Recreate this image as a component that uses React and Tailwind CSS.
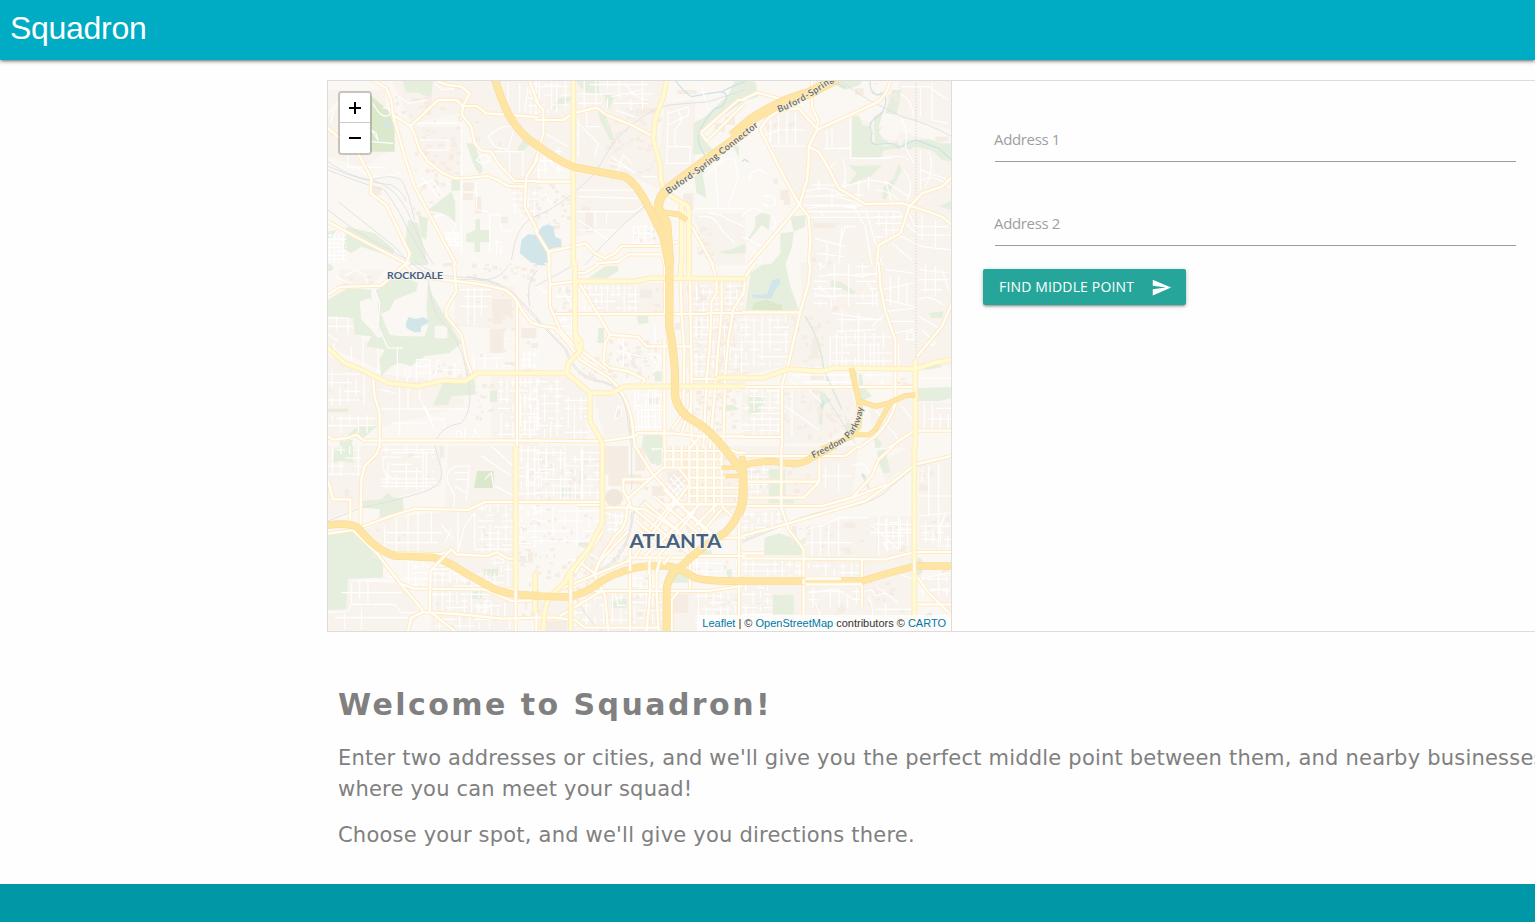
import React from "react";

// Each sheet covers a 210x185 area of the map, drawn at three units per pixel.
const sheets = [
  {
    x: 328, y: 80,
    land: ["0,30 170,30 190,210 100,262 0,230", "190,0 630,0 630,300 560,300 490,215 440,190 400,100 250,130", "250,140 400,140 400,290 340,280 280,220", "540,310 630,310 630,440 580,400"],
    parks: ["225,3 315,3 310,53 270,38 232,38", "415,188 440,192 465,270 455,285 435,250", "565,215 595,160 610,190 580,215", "370,300 397,300 397,332 370,332", "300,390 370,335 382,365 382,430 340,400", "442,418 456,418 456,450 484,450 484,487 456,487 456,516 440,516 440,487 414,487 414,462 442,450", "240,420 270,430 300,555 250,555 233,480", "270,405 300,415 295,480 280,470", "55,440 140,460 200,510 190,530 100,500 70,520 48,505", "0,455 25,450 10,475 0,475"],
    dark: ["120,40 185,95 200,150 200,215 120,215"],
    water: ["580,480 600,463 632,465 632,550 610,548 575,520", "166,137 178,126 190,128 190,136 172,145"],
    buildings: [[405, 308, 32, 25], [405, 340, 30, 20], [290, 60, 20, 45], [440, 350, 20, 50], [250, 55, 30, 12], [135, 320, 25, 25], [515, 410, 25, 20]],
    minor: ["M135,70 Q160,120 185,105 Q190,80 165,85 M130,150 L150,180 145,160 Z M130,185 L195,190", "M60,225 V262 H170 M90,262 Q130,310 215,280", "M10,130 Q10,80 50,60 M0,110 Q20,60 60,50", "M400,130 V520 M250,130 H385 M275,180 H360 V210 H290", "M445,305 V390 L480,395 M485,400 V520 M485,405 H515 L520,450 550,455", "M480,170 Q520,130 560,140 L540,210 500,200 Z", "M545,220 V300 M500,215 H585 V290", "M445,240 Q470,210 485,240 Q465,260 445,240", "M320,10 L345,30 380,25", "M200,40 L240,70 300,60 M540,5 V80 M575,10 V95 M600,20 L590,95", "M310,420 Q350,380 385,440 L350,480", "M280,290 L330,350 M265,320 L315,300 340,340"],
    rail: ["M0,245 Q60,290 130,300 Q210,320 250,420 Q300,540 320,555", "M0,270 Q100,310 170,330 Q220,400 240,450 L300,550", "M0,258 Q100,305 190,315 Q230,340 235,365", "M30,365 L200,500 250,555", "M0,390 Q60,440 130,480 L240,540", "M130,300 Q190,280 220,300 Q240,330 260,420", "M630,405 Q580,420 560,490 L550,540"],
    sec: ["M135,0 L175,25 190,60 195,105 230,230 260,320 340,470 385,555", "M195,105 L248,138 260,165 275,210 300,245 345,280 380,295 430,293 480,288 510,300 540,318 590,320", "M248,138 L330,60 385,60 405,78 445,78 475,100 550,105 630,112", "M330,5 L360,15 400,20 425,40 405,78 402,105 430,140 440,190 460,212 490,215 510,250 560,303 630,303", "M0,145 L90,220 130,295 128,340 175,375 230,490 245,520 235,555", "M0,425 L120,490 235,550", "M630,235 L595,290 590,380 630,455", "M605,5 L630,70"],
    hwy: [["M500,-5 Q520,60 540,100 Q570,160 632,200", 20]],
    grids: [[600, 0, 30, 110, 16, 22], [550, 330, 80, 80, 20, 18], [0, 460, 55, 90, 13, 12], [350, 455, 45, 45, 9, 9], [500, 480, 30, 45, 12, 13]],
    blds: [[200, 20, 200, 120, 20], [260, 140, 130, 140, 34], [250, 290, 90, 110, 14], [410, 110, 120, 100, 8], [0, 60, 110, 150, 8]],
  },
  {
    x: 535, y: 80,
    land: ["0,0 390,0 355,170 380,330 290,290 120,260 0,190", "390,70 480,60 480,260 390,320 370,230", "120,280 280,300 340,380 240,450 120,470", "470,400 630,400 630,555 535,555"],
    parks: ["122,0 190,0 193,42 155,38 135,20", "205,43 240,45 222,90", "190,90 205,90 240,180 225,180 195,120", "475,130 510,110 580,45 600,0 632,0 632,60 490,160 515,190 540,215 475,225", "478,290 500,265 515,355 485,340", "50,90 70,55 110,50 110,60", "590,190 612,200 612,235", "552,515 590,508 632,490 632,520 580,522"],
    water: ["0,470 20,440 38,433 56,440 60,470 78,478 80,500 50,505 38,520 42,545 20,552 0,545"],
    rivers: ["M420,0 Q450,40 470,50 Q520,40 560,35 Q590,45 560,80 L540,85 Q490,140 490,180 Q500,220 515,230", "M560,35 Q600,15 630,5"],
    buildings: [[150, 395, 25, 60], [140, 380, 25, 12], [425, 30, 60, 12], [445, 340, 30, 50], [300, 85, 60, 15], [540, 130, 30, 25], [570, 110, 30, 25]],
    minor: ["M130,115 V230 M130,130 L190,190 180,230 M155,90 V140 H195", "M270,10 Q300,60 340,60 M230,50 L320,30 M240,90 L300,110", "M130,330 H300 M130,350 L310,355 M125,395 H300 L320,380 M180,395 V440 M215,395 V430", "M230,230 L300,280 M220,245 L290,270 M240,290 L265,225 290,250 M320,290 H365", "M400,90 L395,250 H465 V200 M395,200 H465 M430,90 L440,120 420,150 420,200", "M500,20 L520,90 M400,100 L460,80 460,105 400,135", "M510,290 Q570,220 600,240 L610,290 580,380 M540,250 L550,380 M480,385 H630", "M490,410 Q540,400 560,450 L600,490 M520,400 Q560,400 580,420 L630,440", "M295,440 V490 H350 V440 H295 M310,440 V490 M330,440 V490 M295,460 H350", "M130,420 L220,480 M130,450 H240 M60,390 L30,340", "M0,20 H100 M50,0 V90 M30,160 L100,200"],
    rail: ["M0,410 Q80,380 180,280 L240,180 Q330,90 400,75 L520,65 630,30", "M150,555 Q250,440 340,370"],
    prim: ["M115,0 V555", "M395,0 L385,50 360,120 355,180 375,250 378,300 390,335 435,365"],
    sec: ["M0,60 L25,90 25,160 0,250", "M0,120 H85 L115,100 185,83 215,105 290,135 355,170", "M0,305 H110", "M0,450 L40,515 45,555", "M40,515 L110,500 150,490 180,520 210,535 240,520 260,498 370,498 430,485", "M185,550 L250,545 280,523 380,523 390,555", "M465,430 L535,555", "M497,158 L610,60 630,60 M497,158 L515,183 630,70"],
    prim2: ["M435,365 Q465,375 462,395 V555", "M440,375 V555"],
    hwy: [["M-4,188 Q70,245 120,262 L270,290 Q305,310 340,380 L385,470 401,555", 20], ["M635,152 L500,250 400,325 Q370,350 370,385 L395,430 404,555", 24], ["M370,395 L430,403 455,420", 13]],
    grids: [[0, 0, 105, 100, 26, 30], [0, 200, 80, 95, 20, 28], [130, 0, 220, 90, 35, 28]],
    blds: [[210, 110, 150, 180, 40], [0, 310, 100, 130, 26], [260, 60, 110, 80, 14], [480, 440, 50, 100, 14], [280, 430, 80, 60, 9]],
  },
  {
    x: 742, y: 80,
    land: ["60,110 170,90 225,150 190,300 170,370 110,260", "230,150 330,110 630,200 630,555 210,555 200,400 175,370 200,210", "470,0 630,0 630,150 470,110"],
    parks: ["330,110 350,105 360,135 385,140 390,185 430,200 465,185 480,205 425,210 420,232 330,232", "450,30 478,30 465,105 430,100", "485,180 560,178 600,190 630,190 630,245 600,240 570,210 520,200 500,210 480,200", "320,255 350,258 420,255 385,290 320,312 345,280", "470,250 480,270 430,360 420,355 425,320 455,295", "145,410 190,405 190,440 155,455", "115,460 155,455 150,500 130,555 85,555 115,520", "40,410 60,398 85,405 80,450 60,435 30,470 10,490 40,440", "590,380 630,360 630,390", "0,0 40,5 50,50 15,60 0,60", "265,0 360,0 355,15 310,30 270,10", "395,110 425,90 410,140 440,190 400,190"],
    paper: ["410,155 430,135 470,140 475,155 460,180 425,178"],
    rivers: ["M385,0 Q380,35 405,45 Q430,35 432,60 Q430,100 400,115 Q375,130 390,160 Q380,190 400,193 L450,190 470,203 520,180 590,205 630,240", "M270,5 Q300,15 310,25", "M0,245 L8,238 20,247"],
    buildings: [[115, 330, 25, 30], [125, 350, 20, 25], [95, 295, 12, 18], [340, 25, 25, 20], [580, 170, 40, 15], [215, 430, 65, 14]],
    minor: ["M70,190 L130,300 M60,170 L110,150 H190 M85,115 V190 M110,100 V195 M135,100 V195 M160,100 V195 M65,198 H190", "M255,150 V205 M270,145 V200 M245,205 H325 M325,110 V235 H450", "M280,245 L260,270 M300,235 Q320,290 300,320 L390,300 440,310 500,350", "M190,335 Q270,310 300,350 M190,350 Q280,340 350,370 M200,385 Q260,370 340,385 M180,375 L345,380", "M180,395 H475 M200,412 H475 M235,395 L245,410 M370,385 L420,555 M330,370 L370,440 390,555", "M220,475 L310,500 M290,500 L310,440 340,440 M225,520 L305,530 M300,440 L290,555 M255,490 V550", "M480,120 Q500,160 490,200 L515,250 M475,40 Q510,60 515,110 M480,20 H560 L620,60 M535,20 V110 M570,10 V120 L620,130", "M485,270 Q520,310 495,360 M410,235 Q480,220 500,240 M380,290 V330 M430,300 L450,370 M400,330 Q440,330 470,360", "M535,210 V330 M560,215 Q580,260 550,320 M535,270 L620,300 M540,300 Q580,280 620,320", "M500,400 L520,440 H620 M490,430 L530,465 H625 M480,470 L540,500 630,510 M450,490 L510,540 M540,400 V480 M580,420 V500", "M0,410 Q30,370 60,395 M60,350 Q100,340 100,370 Q80,390 65,370 M20,300 Q40,250 70,280 M0,470 Q30,480 60,500 M90,410 Q110,430 90,450 M20,500 L60,540"],
    rail: ["M290,0 L380,60 480,110 Q560,130 630,170"],
    sec: ["M0,60 L45,38 110,55 125,70", "M55,150 Q70,110 120,90 L170,85 228,150 M55,150 L120,280 172,375 200,410 205,480 200,555", "M210,0 L210,80 228,120 225,150 200,200 200,240 195,300 172,375 20,555", "M445,5 Q430,55 400,70 L225,150", "M200,200 L230,215 260,265 290,325 370,372 480,370 560,395 600,410 630,435", "M630,290 L600,320 540,340 502,380 475,460 410,495 405,555"],
    hwy: [["M-30,168 L30,117 Q120,60 200,40 L285,-5", 27]],
    grids: [[400, 400, 80, 80, 22, 20], [210, 300, 180, 80, 40, 30]],
    blds: [[380, 0, 80, 60, 14], [60, 110, 120, 60, 7], [210, 400, 200, 150, 8]],
    border: "M522,8 V555",
  },
  {
    x: 328, y: 263,
    land: ["0,160 75,160 80,215 155,250 155,320 0,250", "0,280 130,330 400,360 410,430 0,530", "380,70 560,70 560,200 380,190", "490,340 630,340 630,555 490,530", "30,20 170,20 130,70 40,60"],
    parks: ["0,110 60,75 130,80 130,110 95,115 100,170 130,200 150,225 175,215 230,220 290,220 300,190 295,130 300,60 315,100 400,240 365,270 290,280 250,310 215,300 190,310 160,340 155,290 170,260 145,255 115,250 130,220 80,215 75,165 0,160", "140,85 180,55 200,30 270,60 265,85 200,110 185,140 155,155 150,110", "345,360 440,350 443,395 370,400 360,425 315,428", "486,383 508,383 508,417 486,417", "0,437 60,437 60,447 0,447", "90,490 150,487 100,530 60,515", "0,0 15,10 15,20 0,25", "35,535 75,530 70,555 35,555", "150,110 160,155 190,215 170,230 150,200"],
    paper: ["95,115 125,105 150,150 148,195 120,180", "188,140 220,110 270,85 295,90 290,125 300,190 290,220 185,215 165,170", "320,188 358,188 358,226 320,226"],
    water: ["233,180 242,162 262,168 285,162 302,172 298,182 280,190 278,208 258,208 235,195"],
    buildings: [[493, 108, 58, 50], [495, 108, 28, 75], [485, 197, 42, 73], [580, 195, 45, 30], [610, 240, 20, 15], [530, 297, 30, 12], [345, 0, 40, 10]],
    minor: ["M140,80 L155,120 150,190 180,255 H225 M208,255 V350 M150,255 V330", "M0,165 H60 V215 M25,160 V200 M20,240 Q10,270 50,285 M0,190 H75 M70,250 V290 M105,220 V320 M0,215 L30,235", "M265,290 H305 M265,290 V355 M305,290 V355 M265,310 H300 M265,330 H300 M230,335 Q228,315 245,322 Q250,335 238,345 V368", "M240,375 V435 M150,438 H425 M215,370 V515 M275,370 V405 L320,500 M290,430 L310,470 350,465 340,475 M190,480 H300", "M345,320 H400 M330,290 L320,340 M380,300 V345", "M350,500 V480 M385,525 V505 H400 V525 M410,525 V500 M435,525 L440,500 455,525", "M395,80 H490 M410,100 H490 M395,130 H480 M420,75 V185 M440,75 V185 M460,75 V160", "M50,40 L80,20 110,35 120,60 M20,40 L60,60 M160,380 L200,390"],
    rail: ["M250,0 Q300,45 380,50 Q480,40 545,85 L630,175", "M260,-5 Q310,35 380,42 Q490,38 550,85 L630,165", "M300,50 Q310,130 330,160 Q400,240 410,300 L425,380 Q430,450 400,480 Q340,490 325,530", "M630,20 Q590,60 605,130", "M420,40 Q500,70 540,10"],
    prim: ["M-3,252 L50,300 100,320 180,360 270,370 350,352 410,355 450,330 632,330"],
    sec: ["M0,95 L35,72 160,68 230,5 245,0 M230,5 L245,20 260,40 390,55 Q480,65 530,80 Q565,100 580,140 L610,180 630,183", "M378,0 L385,85 355,135 355,160 400,215 415,290 430,330", "M567,115 V555", "M135,345 L140,400 155,450 155,555", "M0,520 L15,530 60,525 85,515 105,532 630,533"],
    grids: [[0, 320, 120, 110, 24, 26], [0, 455, 140, 55, 26, 22], [510, 345, 120, 180, 18, 26], [580, 265, 50, 50, 16, 17], [420, 275, 130, 45, 34, 22], [570, 345, 60, 180, 14, 24]],
    blds: [[400, 90, 220, 240, 22], [310, 285, 90, 60, 9], [430, 350, 60, 120, 14], [430, 0, 190, 50, 22], [40, 5, 120, 60, 6], [0, 260, 120, 160, 7]],
  },
  {
    x: 535, y: 263,
    land: ["125,60 385,60 385,150 180,150", "0,340 95,340 160,390 160,530 0,530", "430,55 630,55 630,365 475,365 450,300", "175,400 250,395 290,510 210,525"],
    parks: ["160,45 210,10 250,8 250,25 215,45", "305,160 340,158 340,180 310,184", "190,195 207,195 207,240 187,240", "360,325 380,325 380,355 360,355", "325,515 385,515 385,555 320,555", "570,425 595,426 612,440 570,445"],
    water: ["0,0 25,0 35,8 5,6"],
    buildings: [[315, 80, 35, 25], [455, 65, 12, 20], [420, 180, 16, 20], [240, 440, 20, 25], [340, 405, 30, 18]],
    minor: ["M245,440 Q250,420 260,440 Q260,470 240,465 Z", "M345,280 L370,310 355,330 M340,270 L375,280 370,310", "M0,70 L40,90 M75,60 L110,130 M60,100 H115", "M250,230 L290,290 M230,260 L320,280 M265,225 V310", "M145,290 L190,310 M300,375 V440 H385 M340,375 V500 M360,375 V500 M320,430 V510 H385", "M50,210 L90,160 M360,190 V245"],
    rail: ["M0,165 L90,260 Q120,350 200,358 Q260,370 275,450 L290,555", "M5,165 L95,260 Q125,345 205,355 Q265,370 280,450 L295,555", "M0,70 L110,10"],
    prim: ["M120,-4 V210 L140,240 135,265 100,300 95,330 -2,330", "M125,55 H300 L350,45 632,48", "M95,330 L165,390 230,390 270,370 632,370", "M165,390 V475 L200,535 205,555", "M120,210 L125,245 135,265", "M540,350 L555,343 H632", "M437,0 V50 M462,0 V50"],
    sec: ["M40,0 L45,60 45,130 75,200 135,270 M45,65 L120,55", "M125,30 L150,30 190,5", "M0,185 L60,195 100,240 135,290 200,330 Q270,370 290,470 L300,555", "M60,153 H510 L525,150 H630", "M130,55 L225,215 310,222 335,250 H470", "M225,215 L210,240 205,300 225,315 280,325 330,350 320,365", "M135,260 L215,320", "M390,0 V150", "M388,225 V555", "M437,50 L440,155 448,260 445,450 410,500", "M465,50 L470,330 468,430 470,530 485,545 M470,420 L440,510", "M530,0 L545,50 545,90 530,115 525,240 515,350 505,555", "M560,50 L560,150 550,250 540,380 525,555", "M630,80 L595,140 580,230 570,340 565,555", "M0,533 L200,535 300,520 310,510 420,512 500,520 630,520", "M475,348 H540", "M500,515 L465,555"],
    hwy: [["M403,-4 V190 Q415,250 420,330 V400 Q430,450 480,475 Q525,500 572,562", 21]],
    grids: [[140, 65, 170, 80, 17, 20], [0, 345, 85, 180, 19, 22], [90, 400, 70, 130, 19, 24], [475, 60, 150, 85, 20, 18], [475, 160, 150, 190, 17, 22], [300, 380, 85, 125, 21, 32], [60, 160, 60, 60, 20, 20]],
    blds: [[210, 230, 160, 110, 50], [55, 60, 60, 90, 12], [475, 50, 150, 300, 90], [400, 380, 100, 130, 15], [130, 270, 90, 80, 20], [480, 375, 140, 130, 36], [350, 60, 40, 90, 8]],
  },
  {
    x: 742, y: 263,
    land: ["175,0 630,0 630,310 140,310 180,140", "0,155 170,155 130,310 0,340", "0,380 115,380 115,520 0,520", "530,420 630,420 630,500 530,500", "380,430 510,400 510,555 400,555", "125,380 330,380 345,480 240,540 125,540"],
    parks: ["25,30 60,5 130,0 145,70 170,140 150,145 60,142 10,140", "270,50 300,60 340,85 335,95 290,75 265,70", "320,320 340,325 360,335 365,370 390,400 350,420 340,360", "525,375 630,372 630,405 590,415 525,415", "235,380 250,400 270,410 245,430 240,490 230,480", "310,480 330,480 330,520 310,520", "20,400 65,400 65,445 20,455", "560,150 605,145 600,165 570,165", "395,515 420,540 415,555 400,555", "530,318 590,302 600,312 560,320"],
    dark: ["35,120 70,110 120,125 120,142 30,140"],
    water: ["30,95 75,93 90,52 112,45 116,60 98,85 88,108 30,104", "236,410 248,415 242,440 236,432"],
    buildings: [[210, 225, 20, 60], [205, 335, 40, 15], [340, 440, 12, 20], [225, 180, 12, 14], [270, 130, 20, 15], [210, 380, 20, 14]],
    minor: ["M230,0 Q240,20 250,5 M230,40 Q300,30 360,40 L405,30 M215,90 Q270,110 300,95 M230,70 L265,100 270,135", "M270,150 L400,170 M285,170 H420 M285,205 L400,200 M300,140 V215 M350,150 V310 M390,190 L430,150 M375,60 Q400,80 390,130", "M265,215 V310 M300,225 V315 M430,20 L515,30 M420,80 L515,60 M430,110 L515,130 M445,40 V130 M470,35 V120 M495,60 V130", "M435,145 L515,135 M445,175 H515 M455,210 L515,200 M495,205 V235 M500,210 Q520,200 515,230 H490", "M530,20 L620,30 M530,50 H620 M535,80 H600 M550,0 V90 M580,10 V100 M600,20 L620,80 M530,110 Q560,90 610,130", "M530,160 L600,200 M540,200 L580,240 M560,235 L570,248 580,240 570,230 Z", "M530,345 H630 M145,350 L160,365 M470,240 V310 M385,240 V310 M410,240 V310", "M480,430 L510,470 M400,440 L470,530 M130,430 L230,500 M150,380 V520 M200,380 L240,420"],
    green: ["M190,160 Q240,240 245,320", "M245,320 L300,440"],
    rail: ["M245,390 L340,540"],
    prim: ["M-3,345 L65,345 140,318 240,325 275,315 520,318 580,298 632,290", "M520,290 V555"],
    sec: ["M40,0 L10,40 5,90 0,100", "M205,0 L200,60 175,145 140,300 120,365 120,555", "M0,148 H175", "M410,0 L415,70 430,145 460,230 460,420", "M630,120 L600,190 525,280", "M0,372 H520", "M520,503 H630", "M460,420 Q450,470 400,520 L350,555", "M520,500 L440,555", "M0,522 H120"],
    hwy: [["M328,315 L345,390 355,440 350,490 330,520 238,558", 13], ["M355,415 L400,430 440,420 490,398 520,396", 12], ["M445,420 L400,500 380,515 340,515", 11]],
    grids: [[0, 160, 140, 150, 24, 22], [0, 375, 115, 145, 24, 17], [215, 0, 190, 130, 42, 22], [270, 210, 180, 100, 28, 24], [535, 420, 95, 80, 24, 32], [150, 325, 300, 45, 36, 22]],
    blds: [[115, 155, 50, 40, 7], [180, 150, 80, 200, 18], [125, 385, 110, 140, 18], [250, 420, 90, 100, 16], [460, 320, 60, 50, 8]],
    border: "M522,0 V285",
  },
  {
    x: 328, y: 446,
    land: ["0,0 340,0 340,120 100,180 0,220", "360,0 560,0 560,165 440,180 350,190", "100,255 190,215 560,175 560,425 500,425 340,330 200,320", "60,400 210,415 280,500 240,555 0,555 0,495 55,490", "310,380 500,435 560,470 560,555 310,555", "570,0 630,0 630,165 570,165"],
    parks: ["20,10 75,0 75,50 40,45 15,50", "105,165 160,160 180,140 195,155 225,155 228,205 155,218 155,190 105,185", "0,260 75,255 165,335 165,395 60,398 55,490 0,492", "465,370 510,368 510,390 470,388", "432,435 462,435 462,458 432,458"],
    dark: ["447,75 497,75 497,126 438,126"],
    buildings: [[335, 0, 14, 35], [50, 130, 12, 20], [575, 330, 20, 15], [600, 320, 14, 30], [605, 80, 18, 14]],
    minor: ["M170,30 Q150,80 200,100 M180,50 V110 M160,110 H330 M190,20 H320 M285,10 V145", "M360,110 Q350,60 400,60 H425 L415,165 M360,110 L380,150 375,200 M380,80 H420 M385,100 H420 M380,120 L415,140", "M470,100 L490,80 497,125 M460,30 L550,90 M490,0 L555,60 M500,120 L560,150", "M70,410 V470 M95,405 V460 M120,405 V470 M70,405 H200 M40,440 H220 M0,500 L60,495 70,475 H200 L220,500 280,500 M50,500 V550 M100,490 V550 M20,515 H240", "M170,240 V320 M205,215 V320 M240,200 V320 M175,290 H330 M175,260 H340 M270,190 V320 M310,195 V290", "M370,250 L350,290 M340,235 L375,280 M390,200 V320 L410,240 440,200 M440,200 V310 H550", "M600,70 H620 V110 H600 Z M595,50 V120", "M180,390 L215,405 M270,400 L300,430", "M490,340 Q510,325 530,345 M490,350 H530"],
    rail: ["M0,225 L100,185 Q200,165 280,140 Q350,120 340,70 L320,0"],
    prim: ["M563,0 V430"],
    sec: ["M155,0 L145,25 110,60 100,100 97,245", "M0,105 L15,160 H67 V240", "M0,263 L75,252 145,320 215,410 270,475 285,495", "M100,243 L190,210 260,188 420,192 470,168 630,168", "M145,320 L340,325 370,310 385,325 480,330 505,318 540,338 563,338", "M215,412 L260,428 470,430 550,465 630,463", "M470,430 H563", "M285,498 L250,515 240,555", "M285,498 L400,505 520,518 630,515", "M310,500 L380,555", "M563,460 V555", "M625,380 V555"],
    hwy: [["M-4,238 Q60,228 90,245 Q140,310 200,330 L320,335 Q360,345 410,380 L500,430 Q540,447 634,449", 19]],
    over: ["M370,310 L335,345 308,375 305,498", "M310,370 H365", "M563,430 V465"],
    grids: [[0, 0, 100, 90, 26, 24], [160, 0, 160, 130, 30, 22], [450, 180, 110, 140, 24, 18], [230, 335, 75, 90, 22, 18], [310, 375, 180, 55, 22, 18], [310, 435, 180, 65, 22, 20], [570, 175, 60, 130, 20, 18], [570, 0, 60, 160, 20, 26], [320, 510, 230, 40, 30, 20], [440, 470, 110, 50, 20, 18], [490, 340, 70, 90, 20, 20]],
    blds: [[570, 300, 60, 60, 10], [570, 170, 60, 120, 12], [100, 240, 400, 100, 10], [310, 380, 240, 160, 8], [240, 0, 90, 120, 5], [570, 370, 60, 160, 16]],
  },
  {
    x: 535, y: 446,
    land: ["0,0 195,0 195,165 0,165", "210,190 280,180 200,370 110,380 200,260", "110,440 390,440 390,555 110,555", "410,440 630,440 630,555 410,555", "385,0 620,0 600,200 500,240 380,100", "0,460 100,460 100,555 0,555"],
    parks: ["80,125 107,125 107,152 80,152", "225,470 275,450 275,485 235,485", "345,15 380,10 380,55 365,60", "385,415 400,370 420,365 480,395 470,410 400,410", "130,290 160,288 155,305 130,305", "575,370 590,370 590,400 575,400", "495,315 530,312 530,328 495,328", "318,0 345,0 370,50 350,55"],
    buildings: [[210, 0, 70, 85], [250, 85, 70, 30], [220, 85, 45, 35], [412, 445, 48, 55], [35, 525, 60, 30], [300, 5, 30, 70], [400, 75, 60, 40], [350, 120, 40, 30]],
    domes: [[237, 155, 27]],
    minor: ["M210,200 L250,210 240,260 M130,300 L190,340 M110,350 L150,375 M90,350 Q110,330 130,350", "M10,70 H60 M0,100 L20,90 20,120 M90,0 V165 M140,0 V165 M110,40 H195 M35,0 V60", "M240,280 L210,350 M120,460 V540 M240,440 L250,480", "M395,130 L440,90 M405,145 L452,100 M415,158 L460,112 M405,95 L455,150 M395,110 L440,165 M415,85 L460,135"],
    rail: ["M290,0 V130", "M290,200 Q290,260 260,310 Q230,360 170,385 L90,420", "M296,190 Q292,265 264,314 Q234,362 174,389", "M110,425 Q150,520 200,555", "M330,160 L295,205"],
    prim: ["M202,-4 V230 L160,310 100,385 90,410 40,455 28,500 25,555", "M107,380 V555", "M0,380 V500"],
    sec: ["M0,168 H200 M125,177 H200", "M202,185 H275 L330,190 430,255 465,330 630,330", "M300,0 L350,80 440,180 560,290", "M265,100 H330 L350,95 M265,100 V135 L285,170 L275,185 Q280,240 240,270 L200,330 180,380", "M275,160 L385,65 H630", "M390,0 V65 M415,0 V65 M440,0 V65 M463,0 V170 M487,0 V170 M512,0 V170 M537,0 V200 M560,0 V175", "M385,15 H560 M385,40 H560 M463,95 H570 M463,125 H615 M463,150 H615 M385,175 H615 M430,65 L465,110", "M300,330 L460,120 M330,330 L500,170 M370,330 L480,195 M345,250 L420,160", "M280,175 L470,330 M330,170 L460,280 M355,150 L500,270 M385,130 L560,300 M300,220 L400,310 M310,250 L370,300", "M480,240 L550,170 M560,180 L605,225 L560,260 M500,260 L560,190", "M75,430 L280,345 285,335 H465", "M285,310 V555", "M130,345 L175,380 210,450 220,555", "M75,510 L200,435 M110,435 H520 L620,420", "M345,330 V440 L335,555 M365,340 V440 L370,555", "M465,330 V430", "M410,555 V460 L430,438", "M612,230 V555", "M0,515 H60 L100,520 M110,515 L150,545 375,545", "M180,380 L190,350 280,255 M205,255 L120,380", "M555,275 H630", "M550,0 L610,20 630,20"],
    hwy: [["M-4,450 L100,453 Q150,445 200,405 Q270,365 340,360 H400 Q430,365 480,395 Q510,407 634,405", 19], ["M395,558 V430 Q400,385 440,360 Q500,300 570,260 Q620,210 622,150 L625,80 562,0", 20], ["M560,65 H630 M570,90 H630", 9]],
    over: ["M343,345 V385", "M375,340 L365,380 M405,330 L385,355", "M285,350 V375", "M107,425 V470"],
    grids: [[0, 10, 195, 150, 22, 20], [0, 180, 195, 120, 36, 30], [115, 445, 165, 90, 26, 22], [290, 385, 95, 150, 18, 24], [480, 440, 130, 100, 22, 20], [470, 340, 140, 55, 30, 24], [215, 200, 60, 60, 18, 20]],
    blds: [[0, 180, 200, 250, 60], [310, 110, 150, 200, 40], [385, 0, 230, 180, 60], [210, 290, 80, 60, 12], [0, 10, 190, 150, 34], [470, 340, 150, 200, 20], [290, 390, 90, 150, 20]],
  },
  {
    x: 742, y: 446,
    land: ["0,0 350,0 330,150 240,180 20,180", "190,240 380,210 510,210 510,310 430,335 190,335", "0,345 360,345 510,330 510,555 0,555", "410,50 510,0 510,50 430,110", "530,60 630,40 630,310 530,310", "530,390 630,390 630,500 560,430", "0,200 120,190 130,235 0,265"],
    parks: ["80,70 130,70 130,155 155,158 155,172 80,172", "67,275 110,262 150,275 185,310 185,328 67,328", "93,447 155,447 155,505 93,505", "405,15 430,10 445,80 425,80 410,50", "520,340 535,335 550,360 535,388 520,388", "550,505 570,498 570,515 550,515", "360,90 370,85 385,130 378,130"],
    water: ["357,86 364,82 370,95 366,100"],
    buildings: [[305, 230, 35, 15], [310, 305, 18, 20], [285, 475, 22, 25], [530, 120, 30, 14], [600, 370, 20, 14], [150, 240, 14, 30], [470, 300, 20, 18], [120, 210, 14, 12]],
    minor: ["M190,260 Q200,240 240,240 L290,215 H380 M210,240 V330 M235,235 V330 M260,235 V330 M290,215 V330 M190,290 H330", "M385,235 L470,310 M385,260 H510 M410,210 V330 M435,215 V320 M470,210 V310 M400,235 H510 M420,290 L440,310", "M365,440 Q390,420 400,450 L430,440 M380,450 Q400,500 390,530 M400,420 L470,470 M440,370 L510,400 M400,490 H510 M430,470 V540", "M540,70 V110 M560,60 V210 M590,50 V300 M530,150 H630 M530,210 L630,200 M535,240 H620 M610,200 L590,260", "M250,60 V130 M290,50 V140 M240,90 H330 M330,60 Q370,40 380,80", "M530,400 L620,380 M540,430 H620", "M200,440 L280,430 340,460 M220,470 L240,520"],
    rail: ["M0,290 L120,240 Q220,200 330,182 Q410,165 450,120 L520,62 630,34", "M0,284 L120,236 Q220,196 330,177"],
    prim: ["M517,-3 V555"],
    sec: ["M0,30 H310 L350,0", "M118,0 V185 L140,250 185,310 V520", "M15,107 H232 V30", "M20,155 H185 L232,107", "M15,180 H240 L330,155 435,115", "M0,270 L130,235 250,200 370,165 450,110 520,55 630,30", "M330,155 L390,90 410,40 455,0", "M0,337 L430,340 520,318 630,318", "M360,340 V485", "M520,385 L560,440 630,510", "M520,475 H630", "M0,322 H65"],
    hwy: [["M-4,60 Q60,40 120,50 Q180,58 200,40 L280,-2", 17], ["M0,30 L5,60 8,130 Q10,180 -6,205", 14], ["M-4,405 H360 Q440,380 520,360 H632", 18]],
    over: ["M190,398 L297,398", "M190,415 H360", "M118,35 V70", "M185,398 V415", "M517,345 V375"],
    grids: [[20, 60, 60, 100, 18, 22], [0, 345, 180, 55, 22, 20], [0, 415, 90, 120, 22, 20], [160, 350, 190, 45, 26, 20], [200, 425, 155, 60, 26, 24], [540, 230, 90, 80, 22, 20], [0, 195, 120, 60, 20, 20], [530, 390, 100, 60, 24, 18], [420, 220, 90, 90, 22, 20]],
    blds: [[0, 60, 230, 110, 24], [190, 230, 320, 90, 18], [0, 420, 500, 110, 14], [370, 400, 80, 80, 10], [530, 70, 100, 230, 8], [140, 240, 50, 60, 8]],
  },
];

function seeded(seed) {
  let s = seed;
  return () => {
    s = (s * 16807) % 2147483647;
    return s / 2147483647;
  };
}

// Residential streets: a grid with gaps, so that blocks differ in length.
function streetGrid([x, y, w, h, dx, dy], seed) {
  const rnd = seeded(seed);
  const parts = [];
  for (let gx = x + dx / 2; gx < x + w; gx += dx) {
    for (let gy = y; gy < y + h; gy += dy) {
      if (rnd() < 0.68) parts.push(`M${gx.toFixed(1)},${gy}V${Math.min(gy + dy, y + h)}`);
    }
  }
  for (let gy = y + dy / 2; gy < y + h; gy += dy) {
    for (let gx = x; gx < x + w; gx += dx) {
      if (rnd() < 0.68) parts.push(`M${gx},${gy.toFixed(1)}H${Math.min(gx + dx, x + w)}`);
    }
  }
  return parts.join("");
}

function footprints([x, y, w, h, n], seed) {
  const rnd = seeded(seed);
  let d = "";
  for (let i = 0; i < n; i += 1) {
    const bw = 5 + rnd() * 11;
    const bh = 4 + rnd() * 9;
    d += `M${(x + rnd() * w).toFixed(1)},${(y + rnd() * h).toFixed(1)}h${bw.toFixed(1)}v${bh.toFixed(1)}h${(-bw).toFixed(1)}z`;
  }
  return d;
}

function Layer({ children, ...rest }) {
  return (
    <g {...rest}>
      {sheets.map((s, i) => (
        <g key={i} transform={`translate(${s.x} ${s.y}) scale(0.33333)`}>
          {children(s, i)}
        </g>
      ))}
    </g>
  );
}

const polys = (list) => (list || []).map((p, i) => <polygon key={i} points={p} />);
const lines = (list) => (list || []).map((d, i) => <path key={i} d={d} />);

function CityMap() {
  return (
    <svg className="block h-[550px] w-[623px]" viewBox="328 81 623 550" fontFamily="Lato, 'Open Sans', sans-serif">
      <rect x="328" y="80" width="624" height="552" fill="#fbf8f4" />
      <Layer fill="#f8f3ec">{(s) => polys(s.land)}</Layer>
      <Layer fill="#e6efdd">{(s) => polys(s.parks)}</Layer>
      <Layer fill="#dbe8cc">{(s) => polys(s.dark)}</Layer>
      <Layer fill="#fbf8f4">{(s) => polys(s.paper)}</Layer>
      <Layer fill="#f5ece3">
        {(s, i) => (
          <>
            {(s.buildings || []).map(([x, y, width, height], k) => (
              <rect key={k} x={x} y={y} width={width} height={height} />
            ))}
            {(s.domes || []).map(([cx, cy, r], k) => (
              <circle key={k} cx={cx} cy={cy} r={r} fill="#f0e8dc" />
            ))}
            {s.blds.map((b, k) => (
              <path key={"b" + k} d={footprints(b, i * 31 + k * 7 + 11)} />
            ))}
          </>
        )}
      </Layer>
      <Layer fill="#d2e6ea">{(s) => polys(s.water)}</Layer>
      <Layer fill="none" stroke="#cbe2e6" strokeWidth="3.5">{(s) => lines(s.rivers)}</Layer>
      <Layer fill="none" stroke="#dfeada" strokeWidth="5">{(s) => lines(s.green)}</Layer>
      <Layer fill="none" stroke="#ffffff" strokeWidth="3.4" strokeLinejoin="round">
        {(s, i) => (
          <>
            {s.grids.map((g, k) => (
              <path key={k} d={streetGrid(g, i * 53 + k * 17 + 5)} />
            ))}
            {lines(s.minor)}
          </>
        )}
      </Layer>
      <Layer fill="none" stroke="#dfdfe0" strokeWidth="2.6">{(s) => lines(s.rail)}</Layer>
      <Layer fill="none" stroke="#e9d3d1" strokeWidth="3" strokeDasharray="4 5">
        {(s) => s.border && <path d={s.border} />}
      </Layer>
      <Layer fill="none" stroke="#feebc4" strokeWidth="12.5" strokeLinejoin="round">{(s) => lines(s.sec)}</Layer>
      <Layer fill="none" stroke="#fffefb" strokeWidth="6.5" strokeLinejoin="round">{(s) => lines(s.sec)}</Layer>
      <Layer fill="none" stroke="#feebc0" strokeWidth="17" strokeLinejoin="round">
        {(s) => lines([...(s.prim || []), ...(s.prim2 || [])])}
      </Layer>
      <Layer fill="none" stroke="#fffad2" strokeWidth="11" strokeLinejoin="round">
        {(s) => lines([...(s.prim || []), ...(s.prim2 || [])])}
      </Layer>
      <Layer fill="none" stroke="#fbdc98" strokeLinejoin="round">
        {(s) => (s.hwy || []).map(([d, w], k) => <path key={k} d={d} strokeWidth={w + 4} />)}
      </Layer>
      <Layer fill="none" stroke="#fee5a3" strokeLinejoin="round">
        {(s) => (s.hwy || []).map(([d, w], k) => <path key={k} d={d} strokeWidth={w} />)}
      </Layer>
      <Layer fill="none" stroke="#feebc4" strokeWidth="12">{(s) => lines(s.over)}</Layer>
      <Layer fill="none" stroke="#fff" strokeWidth="6.5">{(s) => lines(s.over)}</Layer>
      <defs>
        <path id="connector-a" d="M668.5,194.5 L700,172.5 760,125" />
        <path id="connector-b" d="M779,112.5 Q808,102 846,71" />
        <path id="parkway" d="M813.5,458.5 L840,445 Q862,433 864,401" />
      </defs>
      <g fill="#6f7479" stroke="#fdf3d6" strokeWidth="1.2" paintOrder="stroke" fontSize="9.2" fontWeight="700">
        <text><textPath href="#connector-a" textLength="113">Buford-Spring Connector</textPath></text>
        <text><textPath href="#connector-b" textLength="64">Buford-Spring</textPath></text>
        <text><textPath href="#parkway" textLength="76">Freedom Parkway</textPath></text>
      </g>
      <g fill="#46607f" stroke="#fbf8f4" paintOrder="stroke" textAnchor="middle" fontWeight="700">
        <text x="415" y="279" fontSize="9.8" strokeWidth="1.5" textLength="56" lengthAdjust="spacingAndGlyphs">ROCKDALE</text>
        <text x="675.5" y="548" fontSize="19.8" strokeWidth="2" textLength="92" lengthAdjust="spacingAndGlyphs">ATLANTA</text>
      </g>
    </svg>
  );
}

function ZoomControl() {
  return (
    <div className="absolute left-[10px] top-[10px] flex w-[34px] flex-col overflow-hidden rounded border-2 border-black/20 bg-clip-padding text-black">
      <button type="button" aria-label="Zoom in" className="flex h-[30px] items-center justify-center border-b border-[#ccc] bg-white">
        <svg className="size-3" viewBox="0 0 12 12" shapeRendering="crispEdges"><path d="M0 5h12v2H0zM5 0h2v12H5z" /></svg>
      </button>
      <button type="button" aria-label="Zoom out" className="flex h-[30px] items-center justify-center bg-white">
        <svg className="size-3" viewBox="0 0 12 12" shapeRendering="crispEdges"><path d="M0 5h12v2H0z" /></svg>
      </button>
    </div>
  );
}

function AddressField({ label }) {
  return (
    <div className="flex h-[46px] w-[521px] items-start border-b border-[#9e9e9e] pt-3">
      <label className="-ml-px text-[15px] leading-[22px] tracking-[-0.35px] text-[#9e9e9e]">{label}</label>
    </div>
  );
}

export default function App() {
  return (
    <div className="flex h-[922px] w-full flex-col overflow-hidden bg-[#fefefe]">
      <header className="z-10 flex h-[60px] shrink-0 items-center bg-[#00acc4] px-[10px] shadow-[0_2px_2px_0_rgba(0,0,0,0.14),0_3px_1px_-2px_rgba(0,0,0,0.12),0_1px_5px_0_rgba(0,0,0,0.35)]">
        <h1 className="pb-1 font-['Liberation_Sans',sans-serif] text-[32px] leading-[40px] tracking-[-0.3px] text-white">Squadron</h1>
      </header>

      <main className="ml-[327px] flex min-h-0 w-[1250px] flex-1 flex-col pt-5">
        <section className="flex h-[552px] shrink-0 border border-[#ddd]">
          <div className="relative w-[624px] shrink-0 border-r border-[#ddd]">
            <CityMap />
            <ZoomControl />
            <p className="absolute bottom-0 right-0 whitespace-nowrap bg-white/70 px-[5px] font-['Liberation_Sans',sans-serif] text-[11px] leading-[16px] text-[#333]">
              <span className="text-[#0078a8]">Leaflet</span> | © <span className="text-[#0078a8]">OpenStreetMap</span> contributors © <span className="text-[#0078a8]">CARTO</span>
            </p>
          </div>
          <form className="flex flex-col items-start pl-[31px] pt-[35px] font-['Open_Sans',sans-serif]">
            <div className="flex flex-col gap-[38px] pl-3">
              <AddressField label="Address 1" />
              <AddressField label="Address 2" />
            </div>
            <button type="button" className="mt-[23px] flex h-9 w-[203px] items-center justify-between rounded-[2px] bg-[#26a69a] pl-4 pr-[14px] text-white shadow-[0_2px_2px_0_rgba(0,0,0,0.14),0_3px_1px_-2px_rgba(0,0,0,0.12),0_1px_5px_0_rgba(0,0,0,0.2)]">
              <span className="whitespace-nowrap pb-0.5 text-[14px] font-medium tracking-[0.15px]">FIND MIDDLE POINT</span>
              <svg className="size-[21px]" viewBox="0 0 24 24" fill="currentColor"><path d="M2.01 21L23 12 2.01 3 2 10l15 2-15 2z" /></svg>
            </button>
          </form>
        </section>

        <section className="pl-[11px] pt-[50px] font-['DejaVu_Sans',sans-serif] text-[#808080]">
          <h2 className="text-[30px] font-bold leading-[46px] tracking-[2.45px]">Welcome to Squadron!</h2>
          <div className="mt-[15px] flex flex-col gap-[15px] whitespace-nowrap text-[21px] leading-[31px] tracking-[0.21px]">
            <p>Enter two addresses or cities, and we'll give you the perfect middle point between them, and nearby businesses<br />where you can meet your squad!</p>
            <p>Choose your spot, and we'll give you directions there.</p>
          </div>
        </section>
      </main>

      <footer className="h-[38px] shrink-0 bg-[#0097a7]" />
    </div>
  );
}
